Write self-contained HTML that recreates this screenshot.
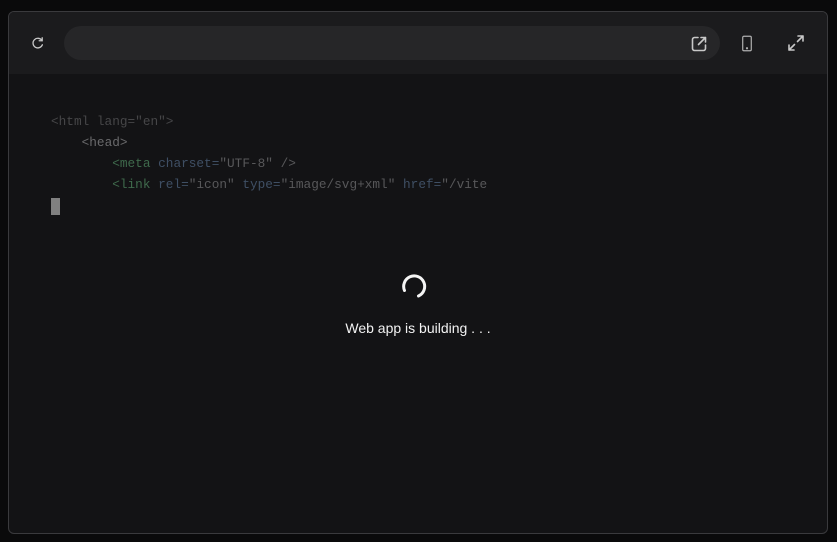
<!DOCTYPE html>
<html><head><meta charset="utf-8"><style>
html,body{margin:0;padding:0;width:837px;height:542px;background:#0a0a0b;overflow:hidden}
.card{position:absolute;left:8px;top:11px;width:818px;height:521px;border:1px solid #3a3a3d;border-radius:6px;background:#131315;overflow:hidden}
.bar{position:absolute;left:0;top:0;width:100%;height:62px;background:#1b1b1d}
.url{position:absolute;left:55px;top:14px;width:656px;height:34px;border-radius:17px;background:#262628}
.ic{position:absolute}
pre{position:absolute;left:42px;top:99px;margin:0;font:12.75px/21px "Liberation Mono",monospace;color:#4e4e50}
.t{color:#464648}.g{color:#3f6a4c}.a{color:#3f4f64}.s{color:#58585a}.h{color:#6a6a6c}
.cur{position:absolute;left:42px;top:186px;width:9px;height:17px;background:#808080}
.msg{position:absolute;left:0;width:100%;top:308px;text-align:center;font:14px "Liberation Sans",sans-serif;color:#f2f2f2}
</style></head><body>
<div class="card">
<div class="bar">
<svg class="ic" style="left:22px;top:24px" width="14" height="14" viewBox="0 0 16 16" fill="none" stroke="#c8c8c8" stroke-width="1.5" stroke-linecap="round"><path d="M12.5 5.2A5.5 5.5 0 1 0 13 10"/><path d="M12.8 2v3.4H9.4"/></svg>
<div class="url"></div>
<svg class="ic" style="left:681px;top:23px" width="18" height="18" viewBox="0 0 18 18" fill="none" stroke="#c8c8c8" stroke-width="1.6" stroke-linecap="round" stroke-linejoin="round"><path d="M8 2.5H4.5a2 2 0 0 0-2 2v9a2 2 0 0 0 2 2h9a2 2 0 0 0 2-2V10"/><path d="M11 2.5h4.5V7M15.5 2.5L8.5 9.5"/></svg>
<svg class="ic" style="left:732px;top:22px" width="12" height="19" viewBox="0 0 14 20" fill="none" stroke="#b0b0b0" stroke-width="1.4"><rect x="2" y="1.5" width="10" height="17" rx="1.5"/><circle cx="7" cy="15.5" r=".6" fill="#b0b0b0"/></svg>
<svg class="ic" style="left:778px;top:22px" width="18" height="18" viewBox="0 0 18 18" fill="none" stroke="#c8c8c8" stroke-width="1.6" stroke-linecap="round" stroke-linejoin="round"><path d="M11 2h5v5M16 2l-5.5 5.5M7 16H2v-5M2 16l5.5-5.5"/></svg>
</div>
<pre><span class="t">&lt;html lang=</span><span class="t">"en"</span><span class="t">&gt;</span>
    <span class="h">&lt;head&gt;</span>
        <span class="g">&lt;meta</span> <span class="a">charset=</span><span class="s">"UTF-8"</span> <span class="s">/&gt;</span>
        <span class="g">&lt;link</span> <span class="a">rel=</span><span class="s">"icon"</span> <span class="a">type=</span><span class="s">"image/svg+xml"</span> <span class="a">href=</span><span class="s">"/vite</span></pre>
<div class="cur"></div>
<svg class="ic" style="left:387px;top:256px" width="36" height="36" viewBox="0 0 36 36" fill="none" stroke="#f5f5f5" stroke-width="3" stroke-linecap="round"><path d="M8.5 22.5A10.5 10.5 0 1 1 22.5 28"/></svg>
<div class="msg">Web app is building . . .</div>
</div>
</body></html>
